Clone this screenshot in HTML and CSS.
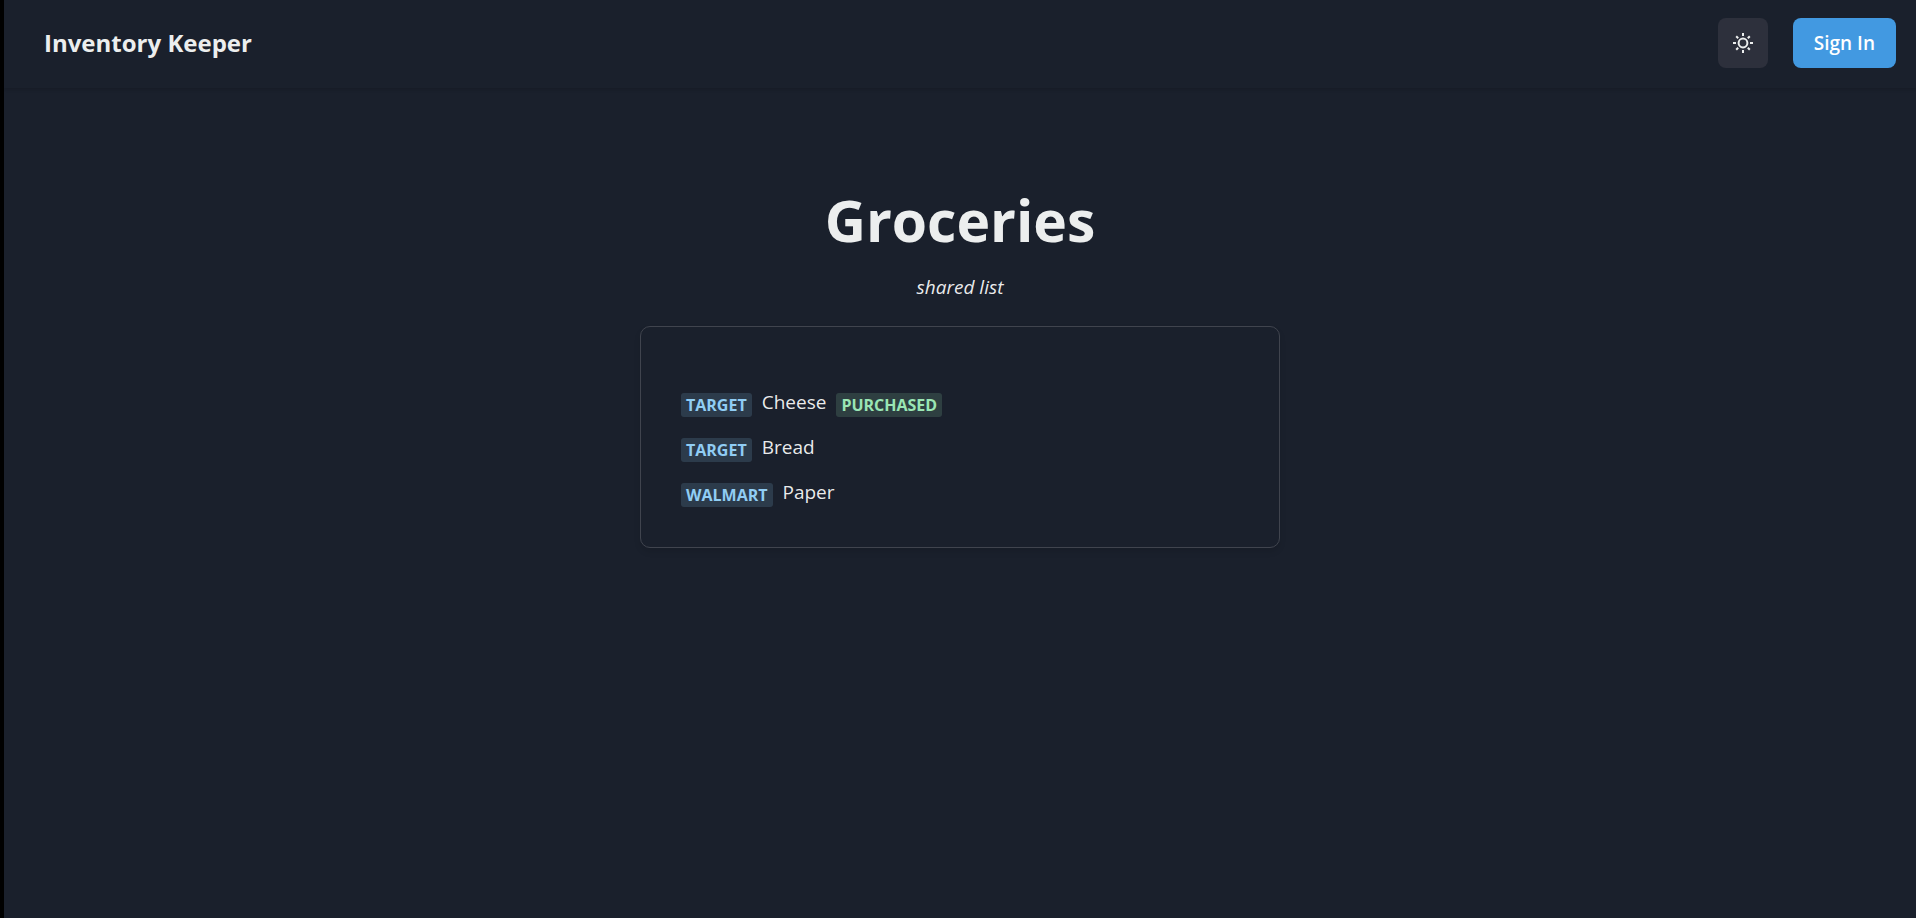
FILE: index.html
```
<!DOCTYPE html>
<html lang="en">
<head>
<meta charset="utf-8">
<meta name="viewport" content="width=device-width, initial-scale=1">
<title>Inventory Keeper</title>
<link rel="stylesheet" href="styles.css">
</head>
<body>
<header class="navbar">
  <a class="brand" href="#">Inventory Keeper</a>
  <div class="actions">
    <button class="icon-button" type="button" aria-label="Toggle color mode">
      <svg class="sun" viewBox="0 0 20 20" fill="none" stroke="currentColor" stroke-width="2" aria-hidden="true">
        <circle cx="10" cy="10" r="4.4"/>
        <path d="M10 0v3M10 17v3M0 10h3M17 10h3M3.2 3.2l2 2M14.8 14.8l2 2M3.2 16.8l2-2M14.8 5.2l2-2"/>
      </svg>
    </button>
    <button class="sign-in" type="button">Sign In</button>
  </div>
</header>
<main class="page">
  <h1 class="title">Groceries</h1>
  <p class="subtitle">shared list</p>
  <section class="card">
    <ul class="items">
      <li class="item"><span class="badge store">Target</span><span class="name">Cheese</span><span class="badge status">Purchased</span></li>
      <li class="item"><span class="badge store">Target</span><span class="name">Bread</span></li>
      <li class="item"><span class="badge store">Walmart</span><span class="name">Paper</span></li>
    </ul>
  </section>
</main>
</body>
</html>
```
FILE: styles.css
```
* {
  box-sizing: border-box;
}

body {
  margin: 0;
  min-height: 100vh;
  border-left: 4px solid #000;
  background: #1a202c;
  color: rgba(255, 255, 255, 0.92);
  font-family: "Segoe UI", "Open Sans", "Noto Sans", sans-serif;
  font-size: 19px;
  line-height: 30px;
}

.navbar {
  display: flex;
  align-items: center;
  justify-content: space-between;
  padding: 18px 20px 20px 40px;
  box-shadow: 0 1px 4px rgba(0, 0, 0, 0.1), 0 1px 3px rgba(0, 0, 0, 0.06);
}

.brand {
  color: #eceeee;
  font-size: 24px;
  font-weight: 700;
  text-decoration: none;
}

.actions {
  display: flex;
  align-items: center;
  gap: 25px;
}

.icon-button,
.sign-in {
  height: 50px;
  border: 0;
  border-radius: 8px;
  font: inherit;
  cursor: pointer;
}

.icon-button {
  display: flex;
  align-items: center;
  justify-content: center;
  width: 50px;
  padding: 0;
  background: #2d303c;
  color: #eceeee;
}

.sun {
  width: 20px;
  height: 20px;
}

.sign-in {
  padding: 0 21px;
  background: #4299e1;
  color: #fff;
  font-weight: 600;
}

.page {
  display: flex;
  flex-direction: column;
  align-items: center;
  padding: 100px 20px;
}

.title {
  margin: 0;
  color: #eceeee;
  font-size: 57px;
  font-weight: 700;
  line-height: 64px;
}

.subtitle {
  margin: 20px 0 24px;
  font-style: italic;
}

.card {
  width: 100%;
  max-width: 640px;
  padding: 60px 40px 40px;
  border: 1px solid #40444e;
  border-radius: 10px;
  box-shadow: 0 4px 6px rgba(0, 0, 0, 0.1);
}

.items {
  display: flex;
  flex-direction: column;
  gap: 15px;
  margin: 0;
  padding: 0;
  list-style: none;
}

.item {
  display: flex;
  align-items: flex-end;
  gap: 10px;
}

.badge {
  padding: 0 5px;
  border-radius: 3px;
  font-size: 16px;
  font-weight: 700;
  line-height: 24px;
  text-transform: uppercase;
}

.store {
  background: rgba(144, 205, 244, 0.16);
  color: #90cdf4;
}

.status {
  background: rgba(154, 230, 180, 0.16);
  color: #9ae6b4;
}
```
